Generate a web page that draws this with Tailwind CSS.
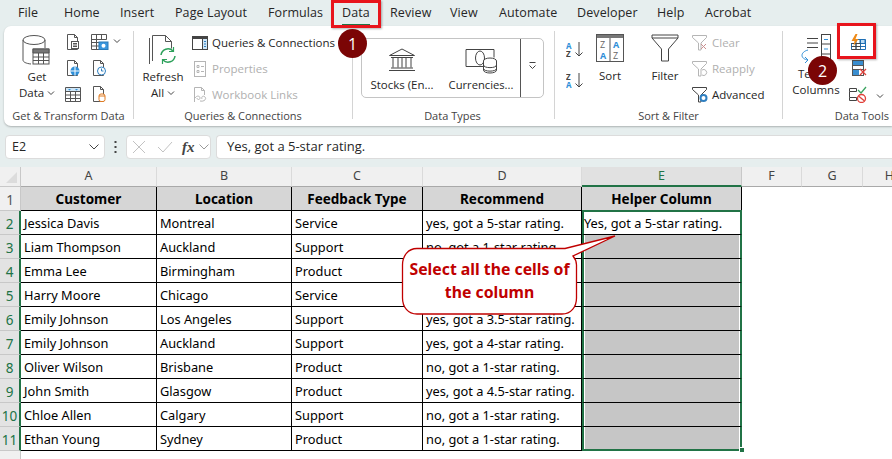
<!DOCTYPE html>
<html lang="en">
<head>
    <meta charset="UTF-8">
    <title>Excel Data tab</title>
    <script src="https://cdn.jsdelivr.net/npm/@tailwindcss/browser@4"></script>
</head>
<body class="w-[892px] h-[459px] overflow-hidden bg-[#e6eeee] relative font-['Open_Sans',sans-serif] text-[#262626]">

    <!-- Tabs -->
    <div class="h-[26px] flex items-center text-[12.5px] pl-[18px] tracking-[0.1px]">
        <span class="w-[46px]">File</span>
        <span class="w-[56px]">Home</span>
        <span class="w-[55px]">Insert</span>
        <span class="w-[93px]">Page Layout</span>
        <span class="w-[74px]">Formulas</span>
        <span class="w-[48px] relative">Data<i class="absolute left-0 top-[20px] w-[28px] h-[2px] bg-[#217346]"></i></span>
        <span class="w-[60px]">Review</span>
        <span class="w-[49px]">View</span>
        <span class="w-[78px]">Automate</span>
        <span class="w-[80px]">Developer</span>
        <span class="w-[48px]">Help</span>
        <span>Acrobat</span>
    </div>

    <!-- Ribbon -->
    <div class="ml-[4px] h-[100px] bg-white rounded-l-[7px] shadow-[0_1px_2px_rgba(0,0,0,0.25)] flex text-[11.5px] leading-[16px]">

        <!-- Get & Transform Data -->
        <div class="w-[129px] h-full flex flex-col">
            <div class="flex-1 flex pt-[8px]">
                <div class="w-[54px] pl-[12px] flex flex-col items-center">
                    <svg class="shrink-0" width="30" height="32" viewBox="0 0 30 32" fill="none" stroke="#555" stroke-width="1"><ellipse cx="12" cy="6" rx="11" ry="4.500"/><path d="M1 6v20c0 2 3 3.500 8 4M23 6v8"/><rect x="11" y="15" width="16" height="15" fill="#fff"/><path d="M11 15h16v4H11z" fill="#777"/><path d="M16.500 19v11M21.500 19v11M11 23h16M11 26.500h16"/></svg>
                    <span class="mt-[3px]">Get</span>
                    <span>Data <svg class="inline" width="8" height="5" viewBox="0 0 8 5" fill="none" stroke="#444"><path d="M1 .5l3 3 3-3"/></svg></span>
                </div>
                <div class="flex flex-col gap-[10px] pl-[7px]">
                    <div class="flex gap-[10px] h-[16px]">
                        <svg width="16" height="16" viewBox="0 0 16 16" fill="none" stroke="#555"><path d="M2.500.5h7l3 3v12h-10zM9.500.5v3h3"/><rect x="6.500" y="7.500" width="7" height="7" fill="#fff"/><path d="M8 9.500h4M8 11h4M8 12.500h4" /></svg>
                        <svg width="18" height="16" viewBox="0 0 18 16" fill="none" stroke="#555"><path d="M.5 3.500v12h8M.5.500h15v5H.5zM5.500.5v15M.5 8.500h8M.5 12h8M10.500.5v5"/><rect x="8" y="8" width="9" height="7.500" fill="#3a96dd" stroke="#2a7ab8"/><circle cx="12.500" cy="11.700" r="2" fill="#fff" stroke="none"/></svg>
                        <svg class="mt-[5px] -ml-[6px]" width="8" height="5" viewBox="0 0 8 5" fill="none" stroke="#444"><path d="M1 .5l3 3 3-3"/></svg>
                    </div>
                    <div class="flex gap-[10px] h-[16px]">
                        <svg width="16" height="16" viewBox="0 0 16 16" fill="none" stroke="#555"><path d="M2.500.5h7l3 3v12h-10zM9.500.5v3h3"/><circle cx="10" cy="11" r="4.500" fill="#2f8fd8" stroke="none"/><path d="M5.500 11h9M10 6.500v9" stroke="#fff"/></svg>
                        <svg width="16" height="16" viewBox="0 0 16 16" fill="none" stroke="#555"><path d="M2.500.5h7l3 3v12h-10zM9.500.5v3h3"/><circle cx="10.500" cy="11" r="4" fill="#fff" stroke="#2f7fc0"/><path d="M10.500 8.500V11h2" stroke="#2f7fc0"/></svg>
                    </div>
                    <div class="flex gap-[10px] h-[16px]">
                        <svg width="16" height="16" viewBox="0 0 16 16" fill="none" stroke="#555"><path d="M1 1.500h14v4H1z" fill="#cfe6f7" stroke="none"/><path d="M.5 1.500h15v14H.5zM.5 5.500h15M.5 9h15M.5 12.500h15M5.500 5.500v10M10.500 5.500v10"/><path d="M3 3h3l-1.500 1.500zM10 3h3l-1.500 1.500z" fill="#2f8fd8" stroke="none"/></svg>
                        <svg width="16" height="16" viewBox="0 0 16 16" fill="none" stroke="#555"><path d="M2.500.5h7l3 3v12h-10zM9.500.5v3h3"/><rect x="8" y="8" width="6" height="7.500" rx="2" fill="#fff" stroke="#e07b20"/><path d="M8 10h6" stroke="#e07b20"/></svg>
                    </div>
                </div>
            </div>
            <div class="h-[17px] text-center text-[11px] text-[#444] leading-[14px]">Get &amp; Transform Data</div>
        </div>
        <i class="w-[1px] h-[88px] mt-[5px] bg-[#d4d4d4]"></i>

        <!-- Queries & Connections -->
        <div class="w-[218px] h-full flex flex-col">
            <div class="flex-1 flex pt-[8px]">
                <div class="w-[56px] pl-[2px] flex flex-col items-center">
                    <svg class="shrink-0" width="30" height="32" viewBox="0 0 30 32" fill="none" stroke="#555"><path d="M4.500 27V1.500h13l6 6v7M17.500 1.500v6h6M1.500 4v26"/><path d="M13 21a7 7 0 0 1 12-4M27 22a7 7 0 0 1-12 4" stroke="#2ca05a" stroke-width="1.500"/><path d="M25.500 13v4.500h-4.500M14.500 30v-4.500h4.500" stroke="#2ca05a" stroke-width="1.200"/></svg>
                    <span class="mt-[3px]">Refresh</span>
                    <span>All <svg class="inline" width="8" height="5" viewBox="0 0 8 5" fill="none" stroke="#444"><path d="M1 .5l3 3 3-3"/></svg></span>
                </div>
                <div class="flex flex-col gap-[10px] pt-[1px] pl-[2px]">
                    <div class="flex items-center h-[16px] gap-[4px]">
                        <svg width="16" height="14" viewBox="0 0 16 14" fill="none" stroke="#444"><rect x=".5" y=".5" width="15" height="13"/><path d="M.5 2h15" stroke-width="2"/><rect x="10" y="3" width="5" height="10" fill="#cfe6f7" stroke="none"/><path d="M10.500 3v10"/><path d="M12 5.500h2M12 8h2M12 10.500h2" stroke="#2f7fc0"/></svg>
                        <span>Queries &amp; Connections</span>
                    </div>
                    <div class="flex items-center h-[16px] gap-[4px] text-[#b0b0b0]">
                        <svg width="16" height="16" viewBox="0 0 16 16" fill="none" stroke="#b5b5b5"><rect x="2.500" y=".5" width="11" height="15"/><path d="M5 4.500h2v2H5zM9 5.500h3M5 9.500h2v2H5zM9 10.500h3"/></svg>
                        <span>Properties</span>
                    </div>
                    <div class="flex items-center h-[16px] gap-[4px] text-[#b0b0b0]">
                        <svg width="16" height="16" viewBox="0 0 16 16" fill="none" stroke="#b5b5b5"><path d="M2.500 15V.5h7l3 3V8M9.500.5v3h3"/><path d="M3 11c2-3 5-2 5 0s-3 2-3 0M8 14c4 1 7-2 5-4s-4 0-3 2"/></svg>
                        <span>Workbook Links</span>
                    </div>
                </div>
            </div>
            <div class="h-[17px] text-center text-[11px] text-[#444] leading-[14px]">Queries &amp; Connections</div>
        </div>
        <i class="w-[1px] h-[88px] mt-[5px] bg-[#d4d4d4]"></i>

        <!-- Data Types -->
        <div class="w-[201px] h-full flex flex-col">
            <div class="flex-1 pt-[12px] pl-[8px]">
                <div class="w-[183px] h-[60px] border border-[#c4c4c4] rounded-[5px] flex">
                    <div class="flex-1 flex">
                        <div class="w-[80px] flex flex-col items-center pt-[9px]">
                            <svg class="shrink-0" width="28" height="24" viewBox="0 0 28 24" fill="none" stroke="#444"><path d="M14 1L1.500 7.500h25zM3 9.500h22M5 9.500v10M10 9.500v10M14 9.500v10M18 9.500v10M23 9.500v10M3 20h22M1 22.500h26"/></svg>
                            <span class="mt-[5px]">Stocks (En...</span>
                        </div>
                        <div class="w-[78px] flex flex-col items-center pt-[9px]">
                            <svg class="shrink-0" width="32" height="26" viewBox="0 0 32 26" fill="none" stroke="#444"><path d="M5 1.500H1v17h4M25 1.500h4v8M1 1.500h28M1 18.500h17"/><ellipse cx="15" cy="10" rx="4.500" ry="7"/><g fill="#fff"><ellipse cx="25" cy="13" rx="6.500" ry="3"/><path d="M18.500 13v9c0 4 13 4 13 0v-9"/><path d="M18.500 17c0 3.500 13 3.500 13 0M18.500 20.500c0 3.500 13 3.500 13 0" fill="none"/></g></svg>
                            <span class="mt-[3px] text-[11.200px]">Currencies...</span>
                        </div>
                    </div>
                    <div class="w-[24px] border-l border-[#555] flex justify-center pt-[23px]">
                        <svg width="9" height="8" viewBox="0 0 9 8" fill="none" stroke="#444"><path d="M1.500.5h6M1.500 3.500l3 3 3-3"/></svg>
                    </div>
                </div>
            </div>
            <div class="h-[17px] text-center text-[11px] text-[#444] leading-[14px] pr-[2px]">Data Types</div>
        </div>
        <i class="w-[1px] h-[88px] mt-[5px] bg-[#d4d4d4]"></i>

        <!-- Sort & Filter -->
        <div class="w-[227px] h-full flex flex-col">
            <div class="flex-1 flex pt-[8px]">
                <div class="w-[41px] pl-[11px] pt-[7px] flex flex-col gap-[14px]">
                    <svg width="18" height="17" viewBox="0 0 18 17" fill="none"><text x="0" y="7.500" font-size="8" font-weight="700" fill="#2f8fd8" font-family="Open Sans">A</text><text x="0" y="16" font-size="8" font-weight="700" fill="#444" font-family="Open Sans">Z</text><path d="M13 1v14M9.500 11.500L13 15l3.500-3.500" stroke="#444"/></svg>
                    <svg width="18" height="17" viewBox="0 0 18 17" fill="none"><text x="0" y="7.500" font-size="8" font-weight="700" fill="#444" font-family="Open Sans">Z</text><text x="0" y="16" font-size="8" font-weight="700" fill="#2f8fd8" font-family="Open Sans">A</text><path d="M13 1v14M9.500 11.500L13 15l3.500-3.500" stroke="#444"/></svg>
                </div>
                <div class="w-[28px] flex flex-col items-center">
                    <svg class="shrink-0" width="28" height="28" viewBox="0 0 28 28" fill="none" stroke="#555"><rect x=".5" y=".5" width="27" height="27"/><path d="M1 1h26v3H1z" fill="#777" stroke="none"/><path d="M14 4v23"/><text x="4" y="14" font-size="9" fill="#666" stroke="none" font-family="Open Sans">Z</text><text x="4" y="25" font-size="9" font-weight="700" fill="#2f8fd8" stroke="none" font-family="Open Sans">A</text><text x="17" y="14" font-size="9" font-weight="700" fill="#2f8fd8" stroke="none" font-family="Open Sans">A</text><text x="17" y="25" font-size="9" fill="#666" stroke="none" font-family="Open Sans">Z</text></svg>
                    <span class="mt-[6px]">Sort</span>
                </div>
                <div class="w-[66px] flex flex-col items-center pl-[16px]">
                    <svg class="shrink-0" width="28" height="28" viewBox="0 0 28 28" fill="none" stroke="#444"><path d="M1 1h26v3L17.500 15v12h-7V15L1 4zM1 4h26"/></svg>
                    <span class="mt-[6px]">Filter</span>
                </div>
                <div class="flex flex-col gap-[10px] pt-[1px] pl-[2px]">
                    <div class="flex items-center h-[16px] gap-[4px] text-[#b0b0b0]">
                        <svg width="16" height="16" viewBox="0 0 16 16" fill="none" stroke="#b5b5b5"><path d="M.5.500h14v2L9 8v7H6.500V8L.5 2.500z"/><path d="M9 9l5 5M14 9l-5 5" stroke="#c98f8f"/></svg>
                        <span>Clear</span>
                    </div>
                    <div class="flex items-center h-[16px] gap-[4px] text-[#b0b0b0]">
                        <svg width="16" height="16" viewBox="0 0 16 16" fill="none" stroke="#b5b5b5"><path d="M.5.500h14v2L9 8v7H6.500V8L.5 2.500z"/><path d="M10 9a3 3 0 1 1 0 5" /></svg>
                        <span>Reapply</span>
                    </div>
                    <div class="flex items-center h-[16px] gap-[4px]">
                        <svg width="16" height="16" viewBox="0 0 16 16" fill="none" stroke="#444"><path d="M.5.500h14v2L9 8v7H6.500V8L.5 2.500z"/><circle cx="11.500" cy="11" r="3" fill="#fff" stroke="#2f7fc0" stroke-width="2"/></svg>
                        <span>Advanced</span>
                    </div>
                </div>
            </div>
            <div class="h-[17px] text-center text-[11px] text-[#444] leading-[14px]">Sort &amp; Filter</div>
        </div>
        <i class="w-[1px] h-[88px] mt-[5px] bg-[#d4d4d4]"></i>

        <!-- Data Tools -->
        <div class="flex-1 h-full flex flex-col">
            <div class="flex-1 flex pt-[8px]">
                <div class="w-[66px] flex flex-col items-center">
                    <svg class="shrink-0" width="30" height="30" viewBox="0 0 30 30" fill="none" stroke="#444"><path d="M6 4.500h11M6 9h11M6 13.500h11"/><rect x="20.500" y=".5" width="9" height="29"/><path d="M20.500 10h9M20.500 20h9"/><path d="M23 5.500h4M23 15h4" stroke="#2f8fd8"/><path d="M7 16c-8 2-8 9 0 10M4 23l3 3-3 3" stroke="#2f8fd8"/></svg>
                    <span class="mt-[2px] pl-[1px]">Text to</span>
                    <span>Columns</span>
                </div>
                <div class="flex flex-col gap-[10px]">
                    <svg width="18" height="16" viewBox="0 0 18 16" fill="none" stroke="#1f6fb5"><path d="M11 5.500h5v4h-5z" fill="#bcdcf4"/><path d="M6.500 5.500h10v10h-14V9"/><path d="M2.500 9.500h14M2.500 12.500h14M7 5.500v10M11.500 5.500v10" /><path d="M2.500 9.500h9M2.500 12.500h9M2.500 15.500h9M7 9.500v6" stroke="#444"/><path d="M6.500 0L2.500 7h3l-1 5 5-7H6.500l2-5z" fill="#ef8a17" stroke="none"/></svg>
                    <svg class="ml-[3px]" width="15" height="16" viewBox="0 0 15 16" fill="none" stroke="#555"><rect x=".5" y=".5" width="11" height="15" fill="#fff"/><path d="M1 1h10v4H1zM1 9h6v6H1z" fill="#3a8ed0" stroke="none"/><path d="M.5 5.500h11M.5 9.500h11"/><path d="M8 9l6 6M14 9l-6 6" stroke="#e0413a" stroke-width="1.300"/></svg>
                    <div class="flex">
                        <svg width="18" height="17" viewBox="0 0 18 17" fill="none" stroke="#444"><path d="M.5 2.500h7v3h-7zM.5 11.500h7v3h-7zM.5 5.500v6"/><path d="M9 4l3 3 5-6" stroke="#3aa35f" stroke-width="1.300"/><circle cx="12.500" cy="12.500" r="4" stroke="#e0413a" stroke-width="1.300"/><path d="M9.500 10l6 5" stroke="#e0413a" stroke-width="1.300"/></svg>
                        <svg class="ml-[9px] mt-[8px]" width="8" height="5" viewBox="0 0 8 5" fill="none" stroke="#444"><path d="M1 .5l3 3 3-3"/></svg>
                    </div>
                </div>
            </div>
            <div class="h-[17px] text-right pr-[3px] text-[11px] text-[#444] leading-[14px]">Data Tools</div>
        </div>
    </div>

    <!-- Formula bar -->
    <div class="mt-[9px] h-[24px] flex items-stretch text-[13px]">
        <div class="ml-[5px] w-[100px] bg-white rounded-[4px] border border-[#dcdcdc] flex items-center justify-between pl-[6px] pr-[5px] text-[12.5px]">
            <span>E2</span>
            <svg width="10" height="6" viewBox="0 0 10 6" fill="none" stroke="#444"><path d="M.5.500l4.500 4.500 4.500-4.500"/></svg>
        </div>
        <div class="w-[21px] flex items-center justify-center">
            <svg width="3" height="13" viewBox="0 0 3 13" fill="#444"><rect x=".5" width="2" height="2"/><rect x=".5" y="5" width="2" height="2"/><rect x=".5" y="10" width="2" height="2"/></svg>
        </div>
        <div class="w-[85px] bg-white rounded-[4px] border border-[#dcdcdc] flex items-center pl-[5px]">
            <svg width="14" height="14" viewBox="0 0 14 14" fill="none" stroke="#c2c2c2"><path d="M1 1l12 12M13 1L1 13"/></svg>
            <svg class="ml-[11px]" width="16" height="12" viewBox="0 0 16 12" fill="none" stroke="#c2c2c2"><path d="M1 6l5 5L15 1"/></svg>
            <span class="ml-[9px] font-['Liberation_Serif',serif] italic font-bold text-[15px] text-[#444]">fx</span>
            <svg class="ml-[4px]" width="10" height="6" viewBox="0 0 10 6" fill="none" stroke="#999"><path d="M.5.500l4.500 4.500 4.500-4.500"/></svg>
        </div>
        <div class="flex-1 ml-[5px] bg-white rounded-l-[4px] border border-r-0 border-[#dcdcdc] flex items-center pl-[10px]">Yes, got a 5-star rating.</div>
    </div>

    <!-- Sheet -->
    <div id="sheet" class="mt-[8px] h-[292px] bg-white grid grid-cols-[21px_136px_135px_131px_159px_160px_60px_61px_54px] grid-rows-[20px_repeat(11,24px)_8px] text-[12.800px] font-['Noto_Sans',sans-serif] text-black"></div>

    <!-- Red highlight boxes -->
    <div class="absolute left-[331px] top-0 w-[50px] h-[28px] border-[3px] border-[#e8141c] shadow-[1px_1px_2px_rgba(0,0,0,0.3)]"></div>
    <div class="absolute left-[837px] top-[23px] w-[39px] h-[36px] border-[3px] border-[#e8141c] shadow-[1px_1px_2px_rgba(0,0,0,0.3)]"></div>

    <!-- Step badges -->
    <div class="absolute left-[338px] top-[29px] w-[29px] h-[29px] rounded-full bg-[#7b0505] text-white text-[16px] flex items-center justify-center">1</div>
    <div class="absolute left-[808px] top-[56px] w-[29px] h-[29px] rounded-full bg-[#7b0505] text-white text-[16px] flex items-center justify-center">2</div>

    <!-- Callout -->
    <div class="absolute left-[400px] top-[232px] w-[220px] h-[86px]">
        <svg class="absolute inset-0" width="220" height="86" viewBox="0 0 220 86" fill="#fff" stroke="#c00000" stroke-width="1.300"><path d="M17 16.500H165L215 4L173 24C175.500 27 176.500 30 176.500 33V66C176.500 75 171 82 162 82H17C8 82 2.500 75 2.500 66V33C2.500 24 8 16.500 17 16.500Z"/></svg>
        <div class="absolute left-[2px] top-[26px] w-[175px] text-center text-[#c00000] font-bold text-[15.800px] leading-[23px] font-['Noto_Sans',sans-serif]">Select all the cells of<br>the column</div>
    </div>

    <script>
        // column letters, then the data rows
        const sheet = document.getElementById('sheet');
        const rows = [
            ['Jessica Davis', 'Montreal', 'Service', 'yes, got a 5-star rating.', 'Yes, got a 5-star rating.'],
            ['Liam Thompson', 'Auckland', 'Support', 'no, got a 1-star rating.', ''],
            ['Emma Lee', 'Birmingham', 'Product', '', ''],
            ['Harry Moore', 'Chicago', 'Service', '', ''],
            ['Emily Johnson', 'Los Angeles', 'Support', 'yes, got a 3.5-star rating.', ''],
            ['Emily Johnson', 'Auckland', 'Support', 'yes, got a 4-star rating.', ''],
            ['Oliver Wilson', 'Brisbane', 'Product', 'no, got a 1-star rating.', ''],
            ['John Smith', 'Glasgow', 'Product', 'yes, got a 4.5-star rating.', ''],
            ['Chloe Allen', 'Calgary', 'Support', 'no, got a 1-star rating.', ''],
            ['Ethan Young', 'Sydney', 'Product', 'no, got a 1-star rating.', '']
        ];
        const add = (cls, text) => {
            const d = document.createElement('div');
            d.className = cls;
            d.textContent = text || '';
            sheet.appendChild(d);
            return d;
        };
        const colHead = 'bg-[#f0f0f0] border-r border-[#dadada] border-b border-b-[#a9a9a9] flex items-center justify-center text-[#444] text-[12.500px]';
        const rowHead = 'bg-[#e3e3e3] border-b border-[#c8c8c8] border-r-2 border-r-[#217346] flex items-end justify-center text-[13.500px] leading-[20px] text-[#217346]';
        const cell = 'border-r border-b border-black flex items-center pl-[3px] pt-[2px] whitespace-nowrap overflow-hidden';
        const headCell = 'bg-[#d6d6d6] border-r border-b border-black flex items-center justify-center pt-[2px] font-bold text-[13.500px]';

        // column header row
        const corner = add('bg-[#f0f0f0] border-r border-b border-[#c8c8c8] relative');
        corner.innerHTML = '<i class="absolute right-[3px] bottom-[3px] w-0 h-0 border-l-[11px] border-l-transparent border-b-[11px] border-b-[#dcdcdc]"></i>';
        ['A', 'B', 'C', 'D'].forEach(c => add(colHead, c));
        add('bg-[#e1e1e1] border-r border-[#c8c8c8] border-b-2 border-b-[#217346] flex items-center justify-center text-[#217346] text-[12.500px]', 'E');
        ['F', 'G', 'H'].forEach(c => add(colHead, c));

        // header row of the table
        add('bg-[#f0f0f0] border-r border-[#c8c8c8] border-b border-b-[#c8c8c8] flex items-end justify-center text-[13.500px] leading-[20px] text-[#555]', '1');
        ['Customer', 'Location', 'Feedback Type', 'Recommend', 'Helper Column'].forEach(h => add(headCell, h));
        add(''); add(''); add('');

        rows.forEach((r, i) => {
            add(rowHead, String(i + 2));
            r.slice(0, 4).forEach(t => add(cell, t));
            const first = i === 0;
            const last = i === rows.length - 1;
            const e = add((first
                ? 'bg-white border-t-2 border-t-[#217346] -mt-[1px]'
                : 'bg-[#c6c6c6] shadow-[inset_1px_0_0_#fff,inset_-1px_0_0_#fff]') + ' border-l-2 border-l-[#217346] border-r-2 border-r-[#217346] flex items-center pt-[2px] whitespace-nowrap ' + (last ? 'border-b-2 border-b-[#217346] relative' : 'border-b border-b-black'), r[4]);
            if (last) e.innerHTML = '<i class="absolute -right-[5px] -bottom-[4px] w-[6px] h-[6px] bg-[#217346] border border-white"></i>';
            add(''); add(''); add('');
        });
        // partial row 12 at the bottom edge
        add('bg-[#f0f0f0] border-r border-[#c8c8c8]');
    </script>
</body>
</html>
